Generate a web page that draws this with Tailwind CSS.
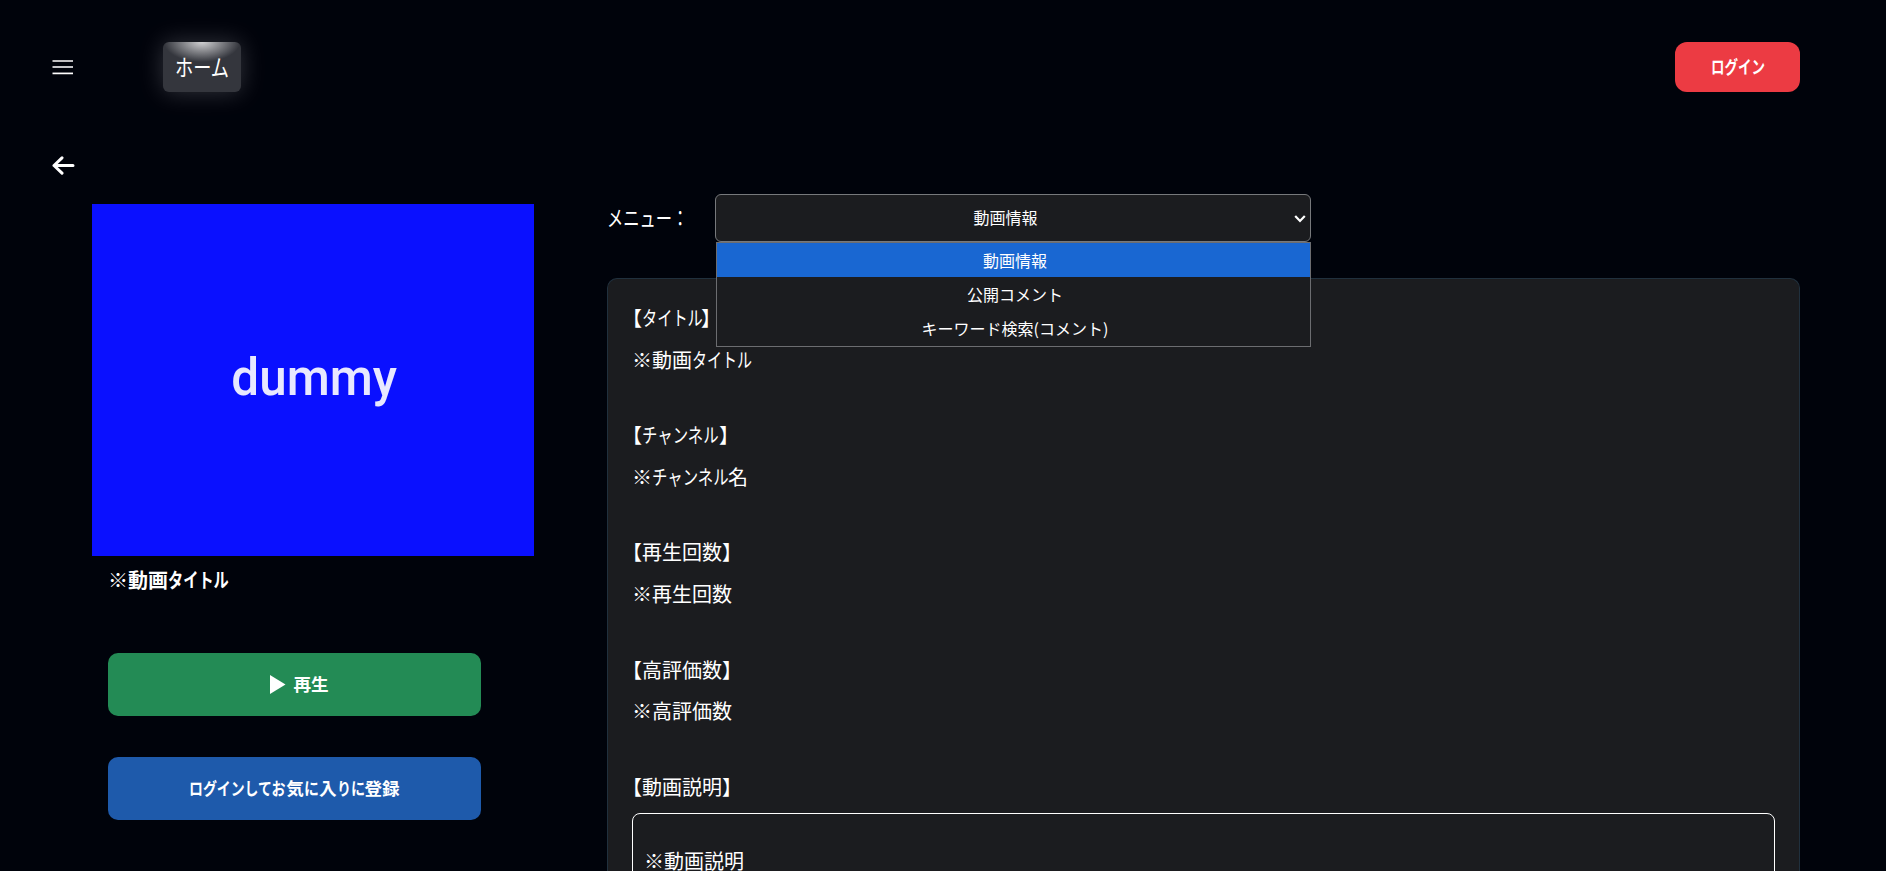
<!DOCTYPE html>
<html lang="ja">
<head>
<meta charset="utf-8">
<title>動画情報</title>
<script src="https://cdn.jsdelivr.net/npm/@tailwindcss/browser@4"></script>
</head>
<body class="h-[871px] overflow-hidden bg-[#00030b] font-['Noto_Sans_CJK_JP',sans-serif] text-[20px] leading-[30px] text-white whitespace-nowrap">
<header class="flex h-[134px] items-center pl-[52px] pr-[86px]">
  <svg class="h-[17px] w-[22px] shrink-0" viewBox="0 0 22 17" fill="none"><path d="M.5 2H21" stroke="#fff" stroke-width="1.5"/><path d="M.5 8H21" stroke="#c4c5c8" stroke-width="2"/><path d="M.5 14.4H21" stroke="#fff" stroke-width="1.7"/></svg>
  <a class="ml-[89px] flex h-[50px] w-[78px] items-center justify-center rounded-[6px] bg-[#34363d] bg-[radial-gradient(ellipse_38px_20px_at_50%_0%,#d0d0d2,#34363d)] pb-[3px] text-[23px] shadow-[0_0_24px_rgba(255,255,255,0.2)]"><span class="block w-[54px]"><span class="block w-max origin-left scale-x-[.79]">ホーム</span></span></a>
  <a class="ml-auto flex h-[50px] w-[125px] items-center justify-center rounded-[12px] bg-[#ec3b43] pb-[2px] text-[18px] font-bold"><span class="block w-[54px]"><span class="block w-max origin-left scale-x-[.75]">ログイン</span></span></a>
</header>
<main class="flex">
  <aside class="w-[607px] shrink-0">
    <svg class="mt-[21px] ml-[52px] h-[21px] w-[23px]" viewBox="0 0 23 21" fill="none" stroke="#fff" stroke-width="3" stroke-linecap="round" stroke-linejoin="round"><path d="M10 2.8 2 10.5l8 7.7M2 10.5h19"/></svg>
    <div class="mt-[28px] ml-[92px] flex h-[352px] w-[442px] items-center justify-center bg-[#0a10ff] pb-[5px] pl-[2px] font-[Roboto,sans-serif] text-[52px] font-medium text-[#e8e8ff]"><span class="block scale-x-[.95]">dummy</span></div>
    <div class="ml-[108px] w-[373px]">
      <h1 class="mt-[9px] flex font-bold"><span>※動画</span><span class="origin-left scale-x-[.76]">タイトル</span></h1>
      <button class="mt-[58px] flex h-[63px] w-full items-center justify-center gap-[7px] rounded-[10px] bg-[#238b55] pl-[10px] text-[17.6px] font-bold"><svg class="h-[19px] w-[16px]" viewBox="0 0 16 19"><path d="M0 0 15.5 9.5 0 19Z" fill="#fff"/></svg><span class="pb-[2px]">再生</span></button>
      <button class="mt-[41px] flex h-[63px] w-full items-center justify-center rounded-[10px] bg-[#1e5aab] pb-[2px] text-[17.6px] font-bold">
        <span class="block w-[97px]"><span class="block w-max origin-left scale-x-[.79]">ログインしてお</span></span><span>気</span><span class="block w-[15px]"><span class="block w-max origin-left scale-x-[.85]">に</span></span><span>入</span><span class="block w-[28px]"><span class="block w-max origin-left scale-x-[.8]">りに</span></span><span>登録</span>
      </button>
    </div>
  </aside>
  <section class="w-[1193px] shrink-0 pt-[60px]">
    <div class="flex h-[48px] items-center">
      <div class="w-[108px] pb-[4px] text-[22px]"><span class="block w-max origin-left scale-x-[.74]">メニュー：</span></div>
      <div class="relative h-[48px] w-[596px] rounded-[6px] border border-[#77797c] bg-[#1b1c1f] text-[16px]">
        <div class="flex h-full items-center justify-center pr-[15px] pb-[2px]">動画情報</div>
        <svg class="absolute right-[4px] top-[19px] h-[10px] w-[12px]" viewBox="0 0 12 10" fill="none" stroke="#fff" stroke-width="2.2"><path d="m1.2 2 4.8 5 4.8-5"/></svg>
        <div class="absolute top-[47px] left-0 z-10 h-[105px] w-[595px] border border-[#6c6d70] bg-[#1b1c1f] text-center leading-[34px]">
          <div class="h-[34px] bg-[#1967d2] pl-[3px]">動画情報</div>
          <div class="h-[34px] pl-[3px]">公開コメント</div>
          <div class="h-[34px] pl-[3px]">キーワード検索(コメント)</div>
        </div>
      </div>
    </div>
    <div class="mt-[36px] h-[593px] overflow-hidden rounded-t-[10px] border border-b-0 border-[#20303d] bg-[#1b1c1f] px-[24px] pt-[24px]">
      <dl>
        <div class="h-[117.2px]"><dt class="-ml-[10px] flex"><span>【</span><span class="w-[59px]"><span class="block w-max origin-left scale-x-[.76]">タイトル</span></span><span>】</span></dt><dd class="mt-[11.5px] flex"><span>※動画</span><span class="origin-left scale-x-[.75]">タイトル</span></dd></div>
        <div class="h-[117.2px]"><dt class="-ml-[10px] flex"><span>【</span><span class="w-[77px]"><span class="block w-max origin-left scale-x-[.77]">チャンネル</span></span><span>】</span></dt><dd class="mt-[11.5px] flex"><span>※</span><span class="w-[76px]"><span class="block w-max origin-left scale-x-[.77]">チャンネル</span></span><span>名</span></dd></div>
        <div class="h-[117.2px]"><dt class="-ml-[10px]">【再生回数】</dt><dd class="mt-[11.5px]">※再生回数</dd></div>
        <div class="h-[117.2px]"><dt class="-ml-[10px]">【高評価数】</dt><dd class="mt-[11.5px]">※高評価数</dd></div>
        <div><dt class="-ml-[10px]">【動画説明】</dt><dd class="mt-[11px] h-[200px] rounded-[8px] border border-white px-[11px] pt-[32px]">※動画説明</dd></div>
      </dl>
    </div>
  </section>
</main>
</body>
</html>
